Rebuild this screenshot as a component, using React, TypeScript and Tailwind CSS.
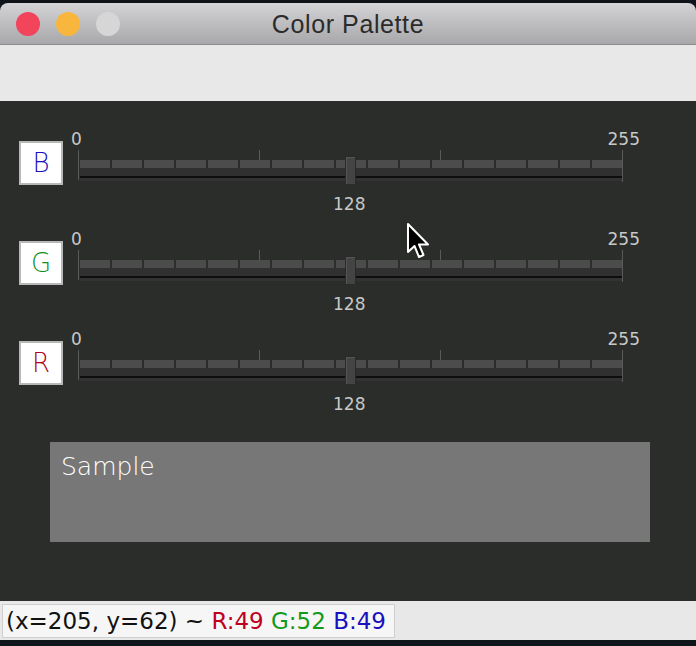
const rows = [
  { letter: 'B', color: 'text-[#1a10c0]' },
  { letter: 'G', color: 'text-[#10901a]' },
  { letter: 'R', color: 'text-[#b00020]' },
];

function Track() {
  return (
    <div className="relative ml-[7px] w-[545px] h-[34px]">
      <div className="absolute left-0 top-0 w-px h-[30px] bg-[#5a5a5a]" />
      <div className="absolute left-[181px] top-0 w-px h-[10px] bg-[#5a5a5a]" />
      <div className="absolute left-[362px] top-0 w-px h-[10px] bg-[#5a5a5a]" />
      <div className="absolute left-[544px] top-0 w-px h-[32px] bg-[#5a5a5a]" />
      <div className="pt-[10px] pl-[2px] pr-[1px]">
        <div className="flex gap-[2px] h-[8px]">
          {Array.from({ length: 17 }).map((_, i) => (
            <div key={i} className="flex-1 bg-[#4c4c4c]" />
          ))}
        </div>
        <div className="h-[8px] bg-[#303030]" />
        <div className="h-[2px] bg-[#0e0e0e]" />
        <div className="h-[3px] bg-[#333333]" />
      </div>
      <div className="absolute left-[267px] top-[6px] w-[11px] h-[29px] bg-[#444] border border-[#2a2a2a] shadow-[inset_1px_1px_0_#555]" />
    </div>
  );
}

function SliderRow({ letter, color }: { letter: string; color: string }) {
  return (
    <div className="flex items-start h-[100px] pl-[19px]">
      <div className="mt-[10px] w-[44px] h-[44px] bg-white border-2 border-[#b8b8b8] flex items-center justify-center">
        <span className={`${color} text-[26px] font-extralight leading-none`} style={{ fontFamily: '"DejaVu Sans", sans-serif' }}>
          {letter}
        </span>
      </div>
      <div className="ml-[8px] w-[569px] flex flex-col text-[#c8c8c8] text-[17px] leading-[17px]" style={{ fontFamily: '"DejaVu Sans", sans-serif' }}>
        <div className="flex justify-between h-[19px]">
          <span>0</span>
          <span>255</span>
        </div>
        <Track />
        <div className="ml-[262px] mt-[12px]">128</div>
      </div>
    </div>
  );
}

export default function App() {
  return (
    <div className="relative w-[696px] h-[646px] bg-[#0f141a] flex flex-col overflow-hidden">
      <div className="mt-[3px] h-[42px] rounded-t-[8px] bg-gradient-to-b from-[#d4d4d6] to-[#a8a8ab] border-b border-[#8c8c8c] flex items-center relative">
        <div className="flex gap-[16px] pl-[16px] pt-[1px]">
          <div className="w-[24px] h-[24px] rounded-full bg-[#f2445a]" />
          <div className="w-[24px] h-[24px] rounded-full bg-[#f8b73c]" />
          <div className="w-[24px] h-[24px] rounded-full bg-[#d6d6d6]" />
        </div>
        <div className="absolute inset-0 pt-[2px] flex items-center justify-center text-[25px] tracking-[0.6px] text-[#2b2b2b]" style={{ fontFamily: '"Liberation Sans", sans-serif' }}>
          Color Palette
        </div>
      </div>
      <div className="h-[56px] bg-[#e8e8e8]" />
      <div className="h-[500px] bg-[#2a2d2a] flex flex-col pt-[30px]">
        {rows.map((r) => (
          <SliderRow key={r.letter} letter={r.letter} color={r.color} />
        ))}
        <div className="ml-[50px] mt-[11px] w-[600px] h-[100px] bg-[#777777] pl-[11px] pt-[6px]">
          <span className="text-white text-[25px] font-extralight" style={{ fontFamily: '"DejaVu Sans", sans-serif' }}>
            Sample
          </span>
        </div>
      </div>
      <div className="h-[39px] bg-[#e8e8e8] pt-[3px] pl-[2px]">
        <div className="w-[393px] h-[34px] bg-[#f6f6f6] border border-[#cfcfcf] flex items-center pl-[3px] text-[23px] text-[#111] whitespace-nowrap" style={{ fontFamily: '"DejaVu Sans", sans-serif' }}>
          <span>(x=205, y=62) ~&nbsp;</span>
          <span className="text-[#c00020]">R:49</span>
          <span>&nbsp;</span>
          <span className="text-[#149a1a]">G:52</span>
          <span>&nbsp;</span>
          <span className="text-[#1a10c0]">B:49</span>
        </div>
      </div>
      <svg className="absolute left-[406px] top-[222px]" width="26" height="40" viewBox="0 0 26 40">
        <path d="M2 2 L2 30 L8.5 24 L13 35 L17.5 33 L13 22.5 L22 22.5 Z" fill="#000" stroke="#fff" strokeWidth="2" strokeLinejoin="round" />
      </svg>
    </div>
  );
}
